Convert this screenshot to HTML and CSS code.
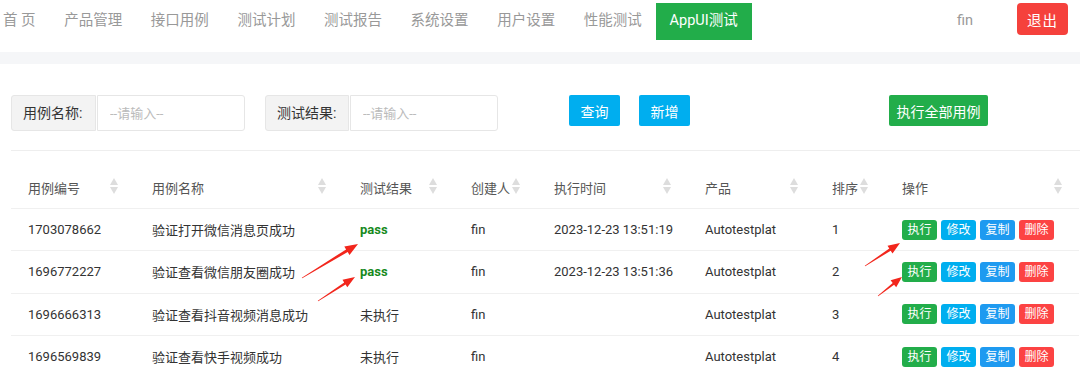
FILE: index.html
```html
<!DOCTYPE html>
<html lang="zh-CN">
<head>
    <meta charset="UTF-8">
    <meta name="viewport" content="width=device-width, initial-scale=1.0">
    <title>AppUI测试</title>
    <link rel="stylesheet" href="styles.css">
</head>
<body>
    <div class="nav">
        <ul class="menu">
            <li class="first">首 页</li>
            <li>产品管理</li>
            <li>接口用例</li>
            <li>测试计划</li>
            <li>测试报告</li>
            <li>系统设置</li>
            <li>用户设置</li>
            <li>性能测试</li>
            <li class="active">AppUI测试</li>
        </ul>
        <span class="user">fin</span>
        <button class="logout">退出</button>
    </div>
    <div class="band"></div>

    <div class="content">
        <div class="search">
            <div class="field">
                <label>用例名称:</label>
                <input type="text" placeholder="--请输入--">
            </div>
            <div class="field second">
                <label>测试结果:</label>
                <input type="text" placeholder="--请输入--">
            </div>
            <button class="btn blue query">查询</button>
            <button class="btn blue add">新增</button>
            <button class="btn green runall">执行全部用例</button>
        </div>

        <table class="cases">
            <colgroup>
                <col style="width:124px">
                <col style="width:208px">
                <col style="width:111px">
                <col style="width:83px">
                <col style="width:151px">
                <col style="width:127px">
                <col style="width:70px">
                <col style="width:194px">
            </colgroup>
            <thead>
                <tr>
                    <th>用例编号<span class="sort"></span></th>
                    <th>用例名称<span class="sort"></span></th>
                    <th>测试结果<span class="sort"></span></th>
                    <th>创建人<span class="sort"></span></th>
                    <th>执行时间<span class="sort"></span></th>
                    <th>产品<span class="sort"></span></th>
                    <th>排序<span class="sort"></span></th>
                    <th>操作<span class="sort"></span></th>
                </tr>
            </thead>
            <tbody>
                <tr>
                    <td>1703078662</td>
                    <td>验证打开微信消息页成功</td>
                    <td class="pass">pass</td>
                    <td>fin</td>
                    <td>2023-12-23 13:51:19</td>
                    <td>Autotestplat</td>
                    <td>1</td>
                    <td class="ops"><span class="op run">执行</span><span class="op edit">修改</span><span class="op copy">复制</span><span class="op del">删除</span></td>
                </tr>
                <tr>
                    <td>1696772227</td>
                    <td>验证查看微信朋友圈成功</td>
                    <td class="pass">pass</td>
                    <td>fin</td>
                    <td>2023-12-23 13:51:36</td>
                    <td>Autotestplat</td>
                    <td>2</td>
                    <td class="ops"><span class="op run">执行</span><span class="op edit">修改</span><span class="op copy">复制</span><span class="op del">删除</span></td>
                </tr>
                <tr>
                    <td>1696666313</td>
                    <td>验证查看抖音视频消息成功</td>
                    <td>未执行</td>
                    <td>fin</td>
                    <td></td>
                    <td>Autotestplat</td>
                    <td>3</td>
                    <td class="ops"><span class="op run">执行</span><span class="op edit">修改</span><span class="op copy">复制</span><span class="op del">删除</span></td>
                </tr>
                <tr>
                    <td>1696569839</td>
                    <td>验证查看快手视频成功</td>
                    <td>未执行</td>
                    <td>fin</td>
                    <td></td>
                    <td>Autotestplat</td>
                    <td>4</td>
                    <td class="ops"><span class="op run">执行</span><span class="op edit">修改</span><span class="op copy">复制</span><span class="op del">删除</span></td>
                </tr>
            </tbody>
        </table>
    </div>

    <!-- red annotation arrows drawn over the screenshot -->
    <svg class="marks" width="1080" height="375" viewBox="0 0 1080 375">
        <polygon points="302.2,278.3 347.7,252 349.5,255 358,244 344.3,246.4 346.1,249.4 301.8,277.7"/>
        <polygon points="318.2,301.3 345.6,284.6 347.3,287.3 355,277 342.5,279.7 344.2,282.4 317.8,300.7"/>
        <polygon points="865.2,266.3 890.7,250.7 892.5,253.4 900,243 887.5,245.8 889.3,248.5 864.8,265.7"/>
        <polygon points="878.2,296.2 894.1,284.7 896.2,287.3 902,277 890.6,280.3 892.7,282.9 877.8,295.8"/>
    </svg>
</body>
</html>
```

FILE: styles.css
```css
body {
    margin: 0;
    font-family: Roboto, "Noto Sans CJK SC", sans-serif;
    color: #333;
    background: #fff;
    position: relative;
    width: 1080px;
    height: 375px;
    overflow: hidden;
}
.nav {
    display: flex;
    align-items: flex-start;
    height: 52px;
    padding-right: 12px;
}
.menu {
    display: flex;
    list-style: none;
    margin: 3px 0 0;
    padding: 0;
    flex: 1;
}
.menu li {
    padding: 0 14.3px;
    height: 37px;
    line-height: 36px;
    font-size: 14.5px;
    color: #999;
}
.menu li.first {
    padding-left: 3px;
}
.menu li.active {
    background-color: #22ad4a;
    color: #fff;
    padding: 0 14px 0 13.5px;
}
.user {
    margin-top: 3px;
    line-height: 36px;
    font-size: 14.5px;
    color: #999;
    margin-right: 44px;
}
.logout {
    margin-top: 3px;
    width: 51px;
    height: 32px;
    background-color: #f5413c;
    color: #fff;
    border: none;
    border-radius: 4px;
    font-family: inherit;
    font-size: 14.5px;
    letter-spacing: 1px;
    padding: 0;
}
.band {
    height: 12px;
    background-color: #f5f6f8;
}
.content {
    padding-left: 11px;
}
.search {
    display: flex;
    align-items: flex-start;
    padding: 31px 0 19px;
    border-bottom: 1px solid #eee;
}
.field {
    display: flex;
}
.field.second {
    margin-left: 20px;
}
.field label {
    box-sizing: border-box;
    width: 85px;
    height: 36px;
    line-height: 34px;
    padding-left: 11px;
    background-color: #f3f3f3;
    border: 1px solid #e6e6e6;
    border-radius: 3px 0 0 3px;
    font-size: 14px;
    color: #333;
}
.field.second label {
    width: 84px;
}
.field input {
    box-sizing: border-box;
    width: 148px;
    height: 36px;
    margin-left: 1px;
    padding: 0 12px;
    border: 1px solid #e6e6e6;
    border-radius: 0 3px 3px 0;
    font-family: inherit;
    font-size: 13px;
    outline: none;
}
.field input::placeholder {
    color: #bbb;
}
.btn {
    height: 31px;
    border: none;
    border-radius: 2px;
    color: #fff;
    font-family: inherit;
    font-size: 14px;
    padding: 0;
}
.blue {
    background-color: #00aeef;
}
.green {
    background-color: #22ad4a;
}
.query {
    width: 51px;
    margin-left: 71px;
}
.add {
    width: 51px;
    margin-left: 19px;
}
.runall {
    width: 99px;
    margin-left: 199px;
}
.cases {
    margin-top: 15px;
    border-collapse: collapse;
    table-layout: fixed;
    width: 1068px;
    font-size: 13px;
}
.cases th,
.cases td {
    height: 41.3px;
    padding: 0 17px;
    text-align: left;
    border-bottom: 1px solid #f0f0f0;
    white-space: nowrap;
}
.cases th {
    height: 42px;
    font-weight: normal;
    color: #555;
}
.cases td.pass {
    color: #178a1d;
    font-weight: bold;
}
.sort {
    float: right;
    position: relative;
    width: 8px;
    height: 16px;
}
.sort::before,
.sort::after {
    content: "";
    position: absolute;
    left: 0;
    border-left: 4px solid transparent;
    border-right: 4px solid transparent;
}
.sort::before {
    top: 0;
    border-bottom: 7px solid #ddd;
}
.sort::after {
    bottom: 0;
    border-top: 7px solid #ddd;
}
.ops {
    font-size: 0;
}
.op {
    display: inline-block;
    width: 35px;
    height: 20px;
    line-height: 20px;
    margin-right: 4px;
    border-radius: 3px;
    text-align: center;
    color: #fff;
    font-size: 12px;
}
.op.run {
    background-color: #22ad4a;
}
.op.edit {
    background-color: #00aeef;
}
.op.copy {
    background-color: #1e9af0;
}
.op.del {
    background-color: #fc4343;
}
.marks {
    position: absolute;
    left: 0;
    top: 0;
    pointer-events: none;
}
.marks polygon {
    fill: #f2261c;
}
```
